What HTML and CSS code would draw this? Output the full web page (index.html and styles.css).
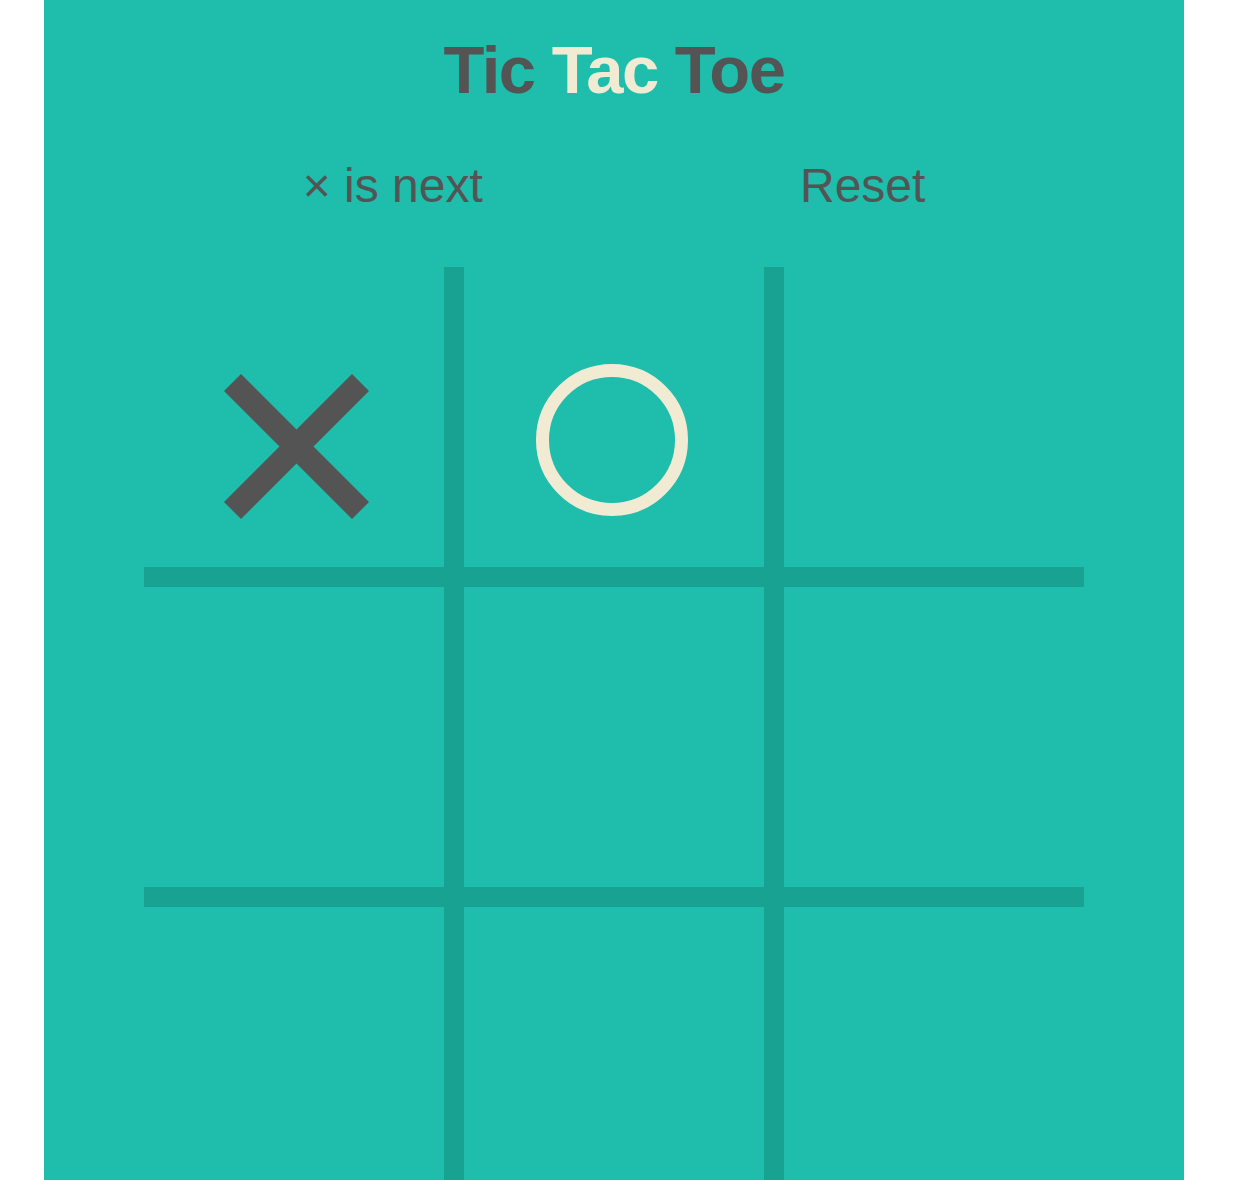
FILE: index.html
```html
<!DOCTYPE html>
<html lang="en">
<head>
<meta charset="utf-8">
<title>Tic Tac Toe</title>
<link rel="stylesheet" href="styles.css">
</head>
<body>
<main class="panel">
  <h1 class="title"><span class="dark">Tic</span> <span class="light">Tac</span> <span class="dark">Toe</span></h1>
  <div class="status">
    <span class="next">× is next</span>
    <span class="reset">Reset</span>
  </div>
  <div class="board">
    <div class="cell">
      <svg class="mark" viewBox="0 0 300 300" width="300" height="300">
        <line x1="88.5" y1="115.5" x2="216.5" y2="243.5" stroke="#545454" stroke-width="24"/>
        <line x1="216.5" y1="115.5" x2="88.5" y2="243.5" stroke="#545454" stroke-width="24"/>
      </svg>
    </div>
    <div class="cell">
      <svg class="mark" viewBox="0 0 300 300" width="300" height="300">
        <circle cx="148" cy="173" r="69.5" fill="none" stroke="#f2ebd3" stroke-width="13"/>
      </svg>
    </div>
    <div class="cell"></div>
    <div class="cell"></div>
    <div class="cell"></div>
    <div class="cell"></div>
    <div class="cell"></div>
    <div class="cell"></div>
    <div class="cell"></div>
  </div>
</main>
</body>
</html>
```
FILE: styles.css
```css
html, body {
  margin: 0;
  padding: 0;
  background: #ffffff;
}
body {
  font-family: "Liberation Sans", Arial, sans-serif;
}
.panel {
  width: 1140px;
  margin-left: 44px;
  min-height: 1180px;
  background: #1ebdac;
  padding-top: 30px;
  box-sizing: border-box;
  display: flex;
  flex-direction: column;
  align-items: center;
}
.title {
  margin: 0;
  font-size: 67px;
  line-height: 80px;
  font-weight: bold;
  letter-spacing: -1.5px;
  text-align: center;
}
.dark { color: #545454; }
.light { color: #f2ebd3; }
.status {
  width: 940px;
  margin-top: 46px;
  display: flex;
  justify-content: space-around;
  font-size: 48px;
  line-height: 60px;
  color: #545454;
}
.board {
  margin-top: 51px;
  width: 940px;
  display: grid;
  grid-template-columns: repeat(3, 300px);
  grid-auto-rows: 300px;
  gap: 20px;
  background: #17a291;
}
.cell {
  background: #1ebdac;
  width: 300px;
  height: 300px;
}
.mark {
  display: block;
}
```
